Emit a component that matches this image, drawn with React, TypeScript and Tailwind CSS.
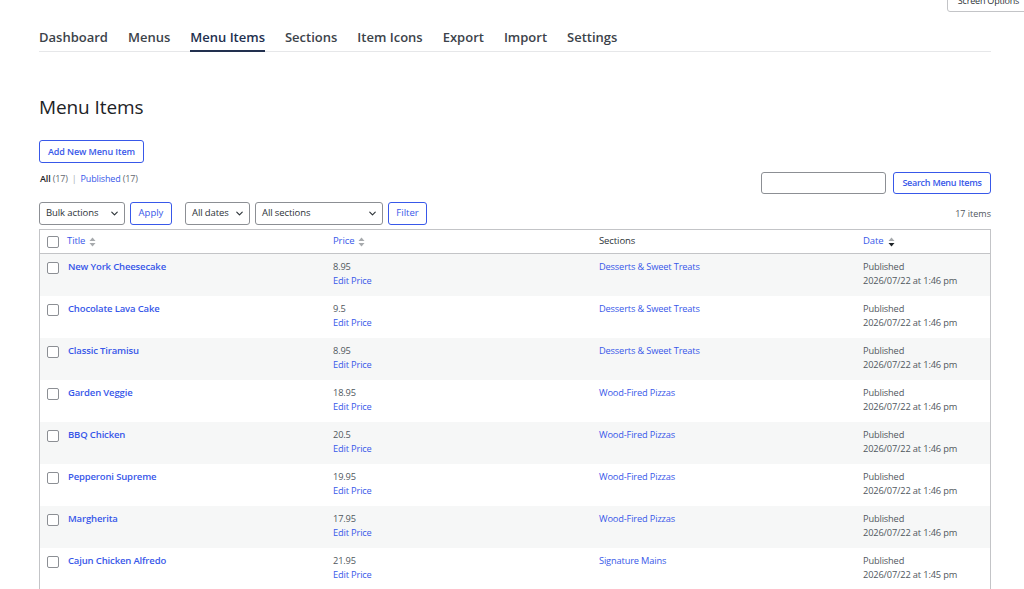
import { ChevronDown } from 'lucide-react'

const tabs = ['Dashboard', 'Menus', 'Menu Items', 'Sections', 'Item Icons', 'Export', 'Import', 'Settings']

const items = [
  { title: 'New York Cheesecake', price: '8.95', section: 'Desserts & Sweet Treats', time: '1:46 pm' },
  { title: 'Chocolate Lava Cake', price: '9.5', section: 'Desserts & Sweet Treats', time: '1:46 pm' },
  { title: 'Classic Tiramisu', price: '8.95', section: 'Desserts & Sweet Treats', time: '1:46 pm' },
  { title: 'Garden Veggie', price: '18.95', section: 'Wood-Fired Pizzas', time: '1:46 pm' },
  { title: 'BBQ Chicken', price: '20.5', section: 'Wood-Fired Pizzas', time: '1:46 pm' },
  { title: 'Pepperoni Supreme', price: '19.95', section: 'Wood-Fired Pizzas', time: '1:46 pm' },
  { title: 'Margherita', price: '17.95', section: 'Wood-Fired Pizzas', time: '1:46 pm' },
  { title: 'Cajun Chicken Alfredo', price: '21.95', section: 'Signature Mains', time: '1:45 pm' },
]

export default function App() {
  return (
    <div className="h-[589px] overflow-hidden bg-white font-['Open_Sans','Noto_Sans',sans-serif] text-[#50575e]">
      {/* Screen options tab */}
      <div className="flex h-[12px] justify-end">
        <div className="-mt-[10px] -mr-[6px] flex h-[22px] w-[83px] items-center justify-center rounded-b-[3px] border border-[#c3c4c7] bg-white text-[9px] tracking-[-0.2px] text-[#2c3338]">
          Screen Options
        </div>
      </div>

      <div className="pl-[39px] pr-[33px]">
        {/* Tabs */}
        <nav className="flex h-[40px] items-end gap-[20px] border-b border-[#e6e7e9]">
          {tabs.map((t) => (
            <Tab key={t} label={t} active={t === 'Menu Items'} />
          ))}
        </nav>

        <h1 className="mt-[43px] text-[19px] leading-[24px] tracking-[-0.1px] text-[#1d2327]">Menu Items</h1>

        <button className="mt-[21px] h-[23px] w-[105px] rounded-[3px] border border-[#3858e9] bg-white text-[9px] font-semibold tracking-[-0.1px] text-[#3858e9]">
          Add New Menu Item
        </button>

        {/* Views + search */}
        <div className="mt-[9px] flex h-[22px] justify-between">
          <div className="self-start pl-[1px] text-[9px] leading-[14px] tracking-[-0.15px]">
            <span className="font-semibold text-[#1d2327]">All</span> <span className="text-[#646970]">(17)</span>
            <span className="mx-[4px] text-[#a7aaad]">|</span>
            <span className="text-[#3858e9]">Published</span> <span className="text-[#646970]">(17)</span>
          </div>
          <div className="flex gap-[7px]">
            <div className="h-[22px] w-[125px] rounded-[3px] border border-[#8c8f94] bg-white" />
            <button className="h-[22px] w-[98px] rounded-[3px] border border-[#3858e9] bg-white text-[9px] font-semibold tracking-[-0.25px] text-[#3858e9]">
              Search Menu Items
            </button>
          </div>
        </div>

        {/* Filters */}
        <div className="mt-[8px] flex h-[23px] items-center">
          <Select label="Bulk actions" width="w-[86px]" />
          <Button label="Apply" width="w-[42px]" className="ml-[5px]" />
          <Select label="All dates" width="w-[65px]" className="ml-[13px]" />
          <Select label="All sections" width="w-[128px]" className="ml-[5px]" />
          <Button label="Filter" width="w-[39px]" className="ml-[5px]" />
          <span className="ml-auto text-[9px] text-[#50575e]">17 items</span>
        </div>

        {/* Table */}
        <div className="mt-[4px] border border-[#c3c4c7]">
          <div className="grid h-[24px] grid-cols-[19px_266px_266px_264px_1fr] items-center border-b border-[#c3c4c7] text-[9.5px] tracking-[-0.1px]">
            <div className="pl-[7px]">
              <Checkbox />
            </div>
            <SortHeader label="Title" />
            <SortHeader label="Price" />
            <div className="pl-[8px] text-[#2c3338]">Sections</div>
            <SortHeader label="Date" active />
          </div>
          {items.map((it, i) => (
            <div
              key={it.title}
              className={`grid h-[42px] grid-cols-[19px_266px_266px_264px_1fr] pt-[6px] text-[9.25px] leading-[14px] tracking-[-0.15px] ${
                i % 2 === 0 ? 'bg-[#f6f7f7]' : 'bg-white'
              }`}
            >
              <div className="pl-[7px] pt-[2px]">
                <Checkbox />
              </div>
              <div className="pl-[9px] text-[9.5px] font-semibold text-[#3858e9]">{it.title}</div>
              <div className="pl-[8px]">
                <div>{it.price}</div>
                <div className="text-[#3858e9]">Edit Price</div>
              </div>
              <div className="pl-[8px] text-[#3858e9]">{it.section}</div>
              <div className="pl-[8px]">
                <div>Published</div>
                <div>2026/07/22 at {it.time}</div>
              </div>
            </div>
          ))}
        </div>
      </div>
    </div>
  )
}

function Tab({ label, active = false }: { readonly label: string; readonly active?: boolean }) {
  return (
    <div
      className={`-mb-px border-b-2 pb-[3px] text-[13px] font-semibold leading-[20px] ${
        active ? 'border-[#22304f] text-[#22304f]' : 'border-transparent text-[#3c434a]'
      }`}
    >
      {label}
    </div>
  )
}

function Select({ label, width, className = '' }: { readonly label: string; readonly width: string; readonly className?: string }) {
  return (
    <div
      className={`flex h-[23px] items-center justify-between rounded-[3px] border border-[#8c8f94] bg-white pl-[6px] pr-[4px] text-[9.5px] tracking-[-0.1px] text-[#2c3338] ${width} ${className}`}
    >
      <span>{label}</span>
      <ChevronDown className="h-[11px] w-[11px]" strokeWidth={2.5} />
    </div>
  )
}

function Button({ label, width, className = '' }: { readonly label: string; readonly width: string; readonly className?: string }) {
  return (
    <button
      className={`h-[23px] rounded-[3px] border border-[#3858e9] bg-white text-[9.5px] text-[#3858e9] ${width} ${className}`}
    >
      {label}
    </button>
  )
}

function Checkbox() {
  return <div className="h-[12px] w-[12px] rounded-[2px] border border-[#8c8f94] bg-white" />
}

function SortHeader({ label, active = false }: { readonly label: string; readonly active?: boolean }) {
  return (
    <div className="flex items-center gap-[4px] pl-[8px] text-[#3858e9]">
      <span>{label}</span>
      <svg width="7" height="10" viewBox="0 0 7 10">
        <path d="M3.5 0.5 L6.5 4 L0.5 4 Z" fill="#a7aaad" />
        <path d="M0.5 6 L6.5 6 L3.5 9.5 Z" fill={active ? '#1d2327' : '#a7aaad'} />
      </svg>
    </div>
  )
}
